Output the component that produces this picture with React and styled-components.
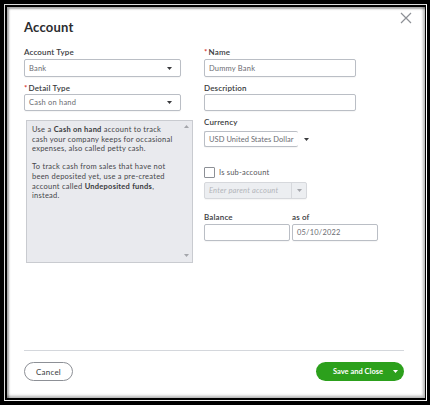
import React from 'react'
import styled, { createGlobalStyle } from 'styled-components'

const Global = createGlobalStyle`
  html, body {
    margin: 0;
    padding: 0;
    background: #000;
  }
  body {
    font-family: Lato, "Open Sans", "Liberation Sans", sans-serif;
    color: #393a3d;
  }
`

const Frame = styled.div`
  width: 430px;
  height: 405px;
  box-sizing: border-box;
  background: #000;
  padding: 4px 3px 4px 4px;
`
const Rim = styled.div`
  height: 100%;
  box-sizing: border-box;
  border: 1px solid #dcdcdc;
  border-right-color: #fff;
  border-bottom-color: #f4f4f4;
`
const Edge = styled.div`
  height: 100%;
  box-sizing: border-box;
  border: 2px solid #000;
  border-right-width: 1px;
`
const Dialog = styled.div`
  height: 100%;
  box-sizing: border-box;
  background: #fff;
  box-shadow: inset 2px 2px 2px rgba(0, 0, 0, 0.35), inset -2px -2px 3px rgba(0, 0, 0, 0.3);
  display: flex;
  flex-direction: column;
`
const Header = styled.div`
  display: flex;
  justify-content: space-between;
  align-items: flex-start;
  padding: 5px 13px 0 17px;
`
const Title = styled.h1`
  margin: 7px 0 0;
  font-size: 13px;
  line-height: 16px;
  font-weight: 700;
  color: #2b2c2f;
  letter-spacing: 0.2px;
`
const Close = styled.button`
  width: 12px;
  height: 12px;
  padding: 0;
  border: 0;
  background: none;
  display: flex;
`
const Form = styled.div`
  display: grid;
  grid-template-columns: 169px 1fr;
  column-gap: 11px;
  margin-top: 12px;
  padding: 0 21px 0 17px;
`
const Column = styled.div`
  display: flex;
  flex-direction: column;
  align-items: flex-start;
`
const Label = styled.div`
  font-size: 8px;
  line-height: 10px;
  font-weight: 600;
  color: #393a3d;
  letter-spacing: 0.15px;
  margin-top: ${p => p.$mt || 0}px;
  white-space: nowrap;
`
const Star = styled.span`
  color: #d52b1e;
  margin-right: 1px;
`
const Box = styled.div`
  box-sizing: border-box;
  width: ${p => p.$w}px;
  height: ${p => p.$h || 17}px;
  margin-top: ${p => p.$mt || 0}px;
  border: 1px solid ${p => (p.$disabled ? '#d6d8dc' : '#babec5')};
  border-right-width: ${p => (p.$open ? 0 : 1)}px;
  border-radius: 2px;
  background: ${p => (p.$disabled ? '#eceef1' : '#fff')};
  box-shadow: 0 1px 1px rgba(0, 0, 0, 0.04);
  display: flex;
  align-items: center;
  padding-left: 4px;
  font-size: 7.5px;
  letter-spacing: ${p => (p.$tight ? 0.05 : 0.2)}px;
  color: #6b6c72;
  white-space: nowrap;
  overflow: hidden;
`
const BoxText = styled.span`
  flex: 1;
  font-style: ${p => (p.$placeholder ? 'italic' : 'normal')};
  color: ${p => (p.$placeholder ? '#b3b5ba' : '#6b6c72')};
`
const Caret = styled.span`
  width: 14px;
  display: flex;
  justify-content: center;
  align-self: stretch;
  align-items: center;
  border-left: ${p => (p.$split ? '1px solid #d6d8dc' : '0')};
  padding: 0 ${p => p.$pad || 0}px;
`
const CurrencyRow = styled.div`
  display: flex;
  align-items: center;
  margin-top: 4px;
`
const Note = styled.div`
  box-sizing: border-box;
  width: 167px;
  height: 143px;
  margin: 9px 0 0 2px;
  background: #e9eaee;
  border: 1px solid #c9cbd0;
  display: flex;
`
const NoteText = styled.div`
  flex: 1;
  padding: 4px 0 0 5px;
  font-size: 7.5px;
  line-height: 9.6px;
  letter-spacing: 0.25px;
  color: #45464a;
  white-space: nowrap;
  p {
    margin: 0 0 8.6px;
  }
  b {
    font-weight: 700;
    color: #393a3d;
  }
`
const Scroll = styled.div`
  width: 12px;
  display: flex;
  flex-direction: column;
  justify-content: space-between;
  align-items: center;
  padding: 4px 0 5px;
`
const CheckRow = styled.label`
  display: flex;
  align-items: center;
  gap: 4px;
  margin-top: 20px;
  font-size: 7.5px;
  letter-spacing: 0.2px;
  color: #55565b;
`
const Check = styled.span`
  box-sizing: border-box;
  width: 11px;
  height: 11px;
  border: 1px solid #8d9096;
  border-radius: 1px;
  background: #fff;
`
const Pair = styled.div`
  display: grid;
  grid-template-columns: 86px 86px;
  column-gap: 2px;
`
const Footer = styled.div`
  margin-top: auto;
  padding: 0 21px 17px 17px;
`
const Divider = styled.hr`
  margin: 0;
  border: 0;
  border-top: 1px solid #d4d7dc;
`
const Actions = styled.div`
  display: flex;
  justify-content: space-between;
  margin-top: 11px;
`
const Pill = styled.button`
  box-sizing: border-box;
  height: 19px;
  border-radius: 10px;
  font-family: inherit;
  font-size: 8px;
  display: flex;
  align-items: center;
  padding: 0;
`
const Cancel = styled(Pill)`
  width: 49px;
  justify-content: center;
  border: 1px solid #8d9096;
  background: #fff;
  color: #393a3d;
  letter-spacing: 0.2px;
`
const Save = styled(Pill)`
  width: 88px;
  border: 0;
  background: #2ca01c;
  color: #fff;
  font-size: 7.5px;
  font-weight: 700;
  padding-left: 17px;
  justify-content: space-between;
  padding-right: 6px;
`

const Arrow = ({ color = '#393a3d' }) => (
  <svg width="5" height="3" viewBox="0 0 5 3">
    <path d="M0 0h5L2.5 3z" fill={color} />
  </svg>
)

const UpArrow = () => (
  <svg width="5" height="3" viewBox="0 0 5 3">
    <path d="M0 3h5L2.5 0z" fill="#a4a6ab" />
  </svg>
)

const Select = ({ value, ...rest }) => (
  <Box {...rest}>
    <BoxText>{value}</BoxText>
    <Caret $pad={4}>
      <Arrow />
    </Caret>
  </Box>
)

export default function App() {
  return (
    <Frame>
      <Global />
      <Rim>
        <Edge>
          <Dialog>
            <Header>
              <Title>Account</Title>
              <Close aria-label="Close">
                <svg width="12" height="12" viewBox="0 0 12 12">
                  <path d="M1 1l10 10M11 1L1 11" stroke="#8d9096" strokeWidth="1.2" />
                </svg>
              </Close>
            </Header>

            <Form>
              <Column>
                <Label>Account Type</Label>
                <Select value="Bank" $w={157} $h={18} $mt={2} />
                <Label $mt={6}><Star>*</Star>Detail Type</Label>
                <Select value="Cash on hand" $w={157} $mt={1} />
                <Note>
                  <NoteText>
                    <p>
                      Use a <b>Cash on hand</b> account to track<br />
                      cash your company keeps for occasional<br />
                      expenses, also called petty cash.
                    </p>
                    <p>
                      To track cash from sales that have not<br />
                      been deposited yet, use a pre-created<br />
                      account called <b>Undeposited funds</b>,<br />
                      instead.
                    </p>
                  </NoteText>
                  <Scroll>
                    <UpArrow />
                    <Arrow color="#a4a6ab" />
                  </Scroll>
                </Note>
              </Column>

              <Column>
                <Label><Star>*</Star>Name</Label>
                <Box $w={152} $h={18} $mt={2}>Dummy Bank</Box>
                <Label $mt={6}>Description</Label>
                <Box $w={152} $mt={1} />
                <Label $mt={6}>Currency</Label>
                <CurrencyRow>
                  <Box $w={94} $h={16} $open $tight>USD United States Dollar</Box>
                  <Caret $pad={1}>
                    <Arrow />
                  </Caret>
                </CurrencyRow>
                <CheckRow>
                  <Check />
                  Is sub-account
                </CheckRow>
                <Box $w={103} $mt={4} $disabled>
                  <BoxText $placeholder>Enter parent account</BoxText>
                  <Caret $split>
                    <Arrow color="#a4a6ab" />
                  </Caret>
                </Box>
                <Pair>
                  <Label $mt={13}>Balance</Label>
                  <Label $mt={13}>as of</Label>
                  <Box $w={86} $mt={2} />
                  <Box $w={86} $mt={2}>05/10/2022</Box>
                </Pair>
              </Column>
            </Form>

            <Footer>
              <Divider />
              <Actions>
                <Cancel>Cancel</Cancel>
                <Save>
                  Save and Close
                  <Arrow color="#fff" />
                </Save>
              </Actions>
            </Footer>
          </Dialog>
        </Edge>
      </Rim>
    </Frame>
  )
}
